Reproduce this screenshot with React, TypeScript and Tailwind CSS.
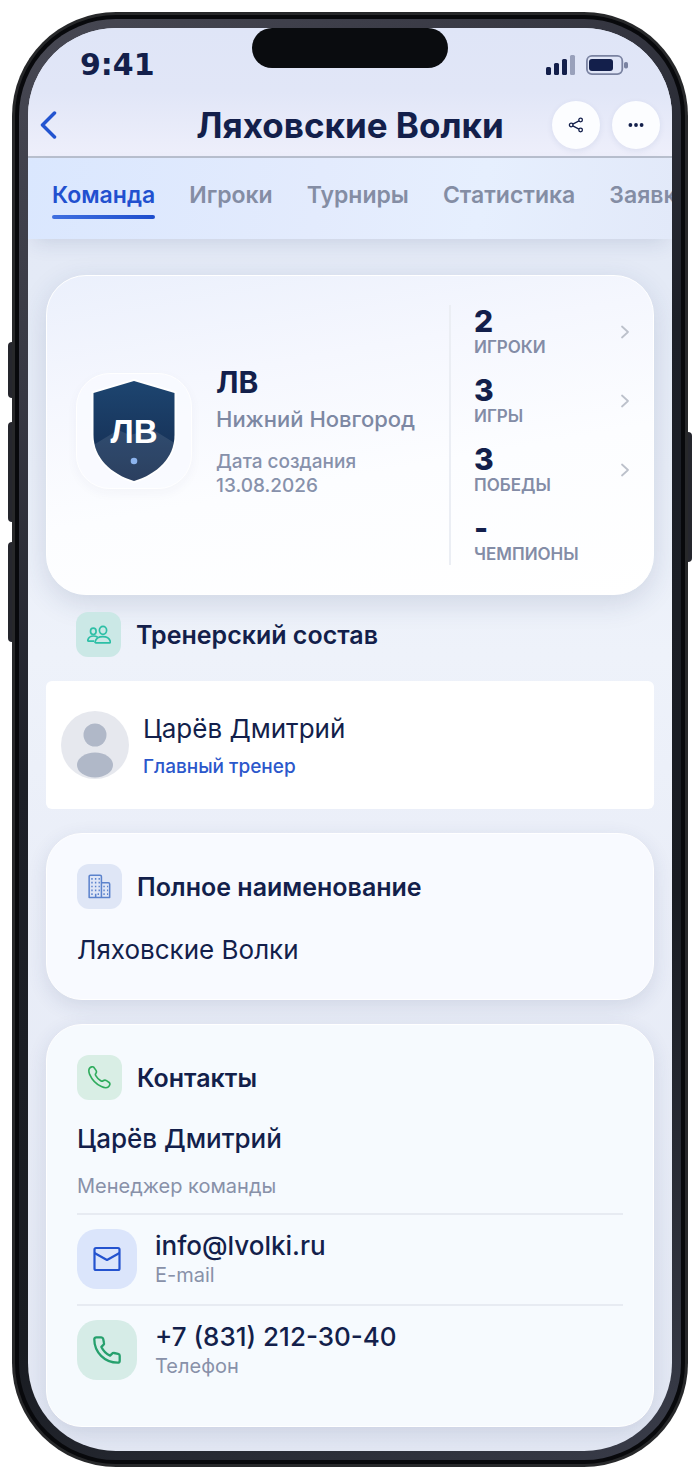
import { useState, type ReactNode } from "react";

const tabs = ["Команда", "Игроки", "Турниры", "Статистика", "Заявки"];

const stats = [
  { value: "2", label: "ИГРОКИ", link: true },
  { value: "3", label: "ИГРЫ", link: true },
  { value: "3", label: "ПОБЕДЫ", link: true },
  { value: "-", label: "ЧЕМПИОНЫ", link: false },
];

function SectionTitle({ icon, tint, children }: { icon: ReactNode; tint: string; children: ReactNode }) {
  return (
    <div className="flex items-center gap-[15px]">
      <span className={`flex size-[45px] shrink-0 items-center justify-center rounded-xl ${tint}`}>{icon}</span>
      <h2 className="text-[25px] leading-8 font-semibold">{children}</h2>
    </div>
  );
}

function StatusBar() {
  return (
    <div className="flex h-[73px] items-center justify-between pr-11 pl-[52px]">
      <span className="font-['DejaVu_Sans'] text-[30px] leading-9 font-bold">9:41</span>
      <div className="flex items-center gap-[10px]">
        <svg className="h-5 w-[30px]" viewBox="0 0 30 20" fill="#131f4b">
          <rect x="0" y="12" width="5" height="8" rx="1.5" />
          <rect x="8" y="8" width="5" height="12" rx="1.5" />
          <rect x="16" y="4" width="5" height="16" rx="1.5" />
          <rect x="24" y="0" width="5" height="20" rx="1.5" opacity="0.35" />
        </svg>
        <svg className="h-5 w-[42px]" viewBox="0 0 42 20" fill="none">
          <rect x="0.9" y="0.9" width="35.4" height="18.2" rx="5" stroke="#131f4b" strokeOpacity="0.5" strokeWidth="1.8" />
          <rect x="3" y="4" width="24" height="12" rx="3" fill="#131f4b" />
          <rect x="38" y="7" width="4" height="6.5" rx="1.8" fill="#131f4b" fillOpacity="0.5" />
        </svg>
      </div>
    </div>
  );
}

function ShareIcon() {
  return (
    <svg className="h-4 w-4" viewBox="0 0 16 16" fill="none" stroke="#131f4b" strokeWidth="1.3">
      <circle cx="3.2" cy="8" r="1.8" />
      <circle cx="12.6" cy="3" r="1.8" />
      <circle cx="12.6" cy="13" r="1.8" />
      <path d="M4.8 7.1 11 3.9M4.8 8.900 11 12.1" />
    </svg>
  );
}

function CoachesIcon() {
  return (
    <svg className="h-5 w-6" viewBox="0 0 24 20" fill="none" stroke="#2dbfa6" strokeWidth="1.7" strokeLinejoin="round">
      <ellipse cx="16" cy="5.3" rx="3.6" ry="4" />
      <ellipse cx="6.3" cy="6.3" rx="2.8" ry="3.2" />
      <path d="M8.7 17.8c-.6 0-.8-.5-.6-1.1.9-3.2 4.1-5 7.7-5s6.8 1.8 7.6 5c.2.6-.1 1.1-.7 1.1z" />
      <path d="M10.6 12.2c-1.1-.8-2.500-1.200-4.100-1.200-2.700 0-5 1.400-5.700 4-.2.600.1 1.100.7 1.100h5.700" />
    </svg>
  );
}

function BuildingIcon() {
  return (
    <svg className="h-[25px] w-[23px]" viewBox="0 0 24 26" fill="none" stroke="#5b82cc" strokeWidth="1.6" strokeLinejoin="round">
      <path d="M1.2 24.5V2.6q0-1.400 1.400-1.400h10q1.400 0 1.400 1.400v21.900zM14 9h7.200q1.400 0 1.400 1.400v14.100H14M8 24v-3.500" />
      <path d="M3.4 5h9M3.4 9h9M3.4 13h9M3.4 17h9M3.4 21h3M10 21h2.400M16 13h5M16 17h5M16 21h5" strokeWidth="1.7" strokeDasharray="1.5 2.3" />
    </svg>
  );
}

function HandsetIcon() {
  return (
    <svg className="size-[23px]" viewBox="0 0 24 24" fill="none" stroke="#2fac5d" strokeWidth="1.700" strokeLinejoin="round">
      <path d="M1.6 2.4C2.8.8 5 .3 6.2 1.500l2 2.800c.9 1.300.7 2.600-.1 3.600-.6.700-.5 1.400 0 2.200 1.200 2.200 3 4 5.200 5.300.9.600 1.700.6 2.500 0 1.100-.8 2.300-.9 3.500-.1l2.800 1.900c1.300 1 .9 3-.8 4.500-1.500 1.300-4 1.300-7.300-.2C9.200 19.400 4 14 1.700 8.800.6 6 .6 3.900 1.600 2.400z" />
    </svg>
  );
}

function MailIcon() {
  return (
    <svg className="h-7 w-7" viewBox="0 0 28 28" fill="none" stroke="#2453cf" strokeWidth="2.2" strokeLinejoin="round">
      <rect x="1.5" y="3" width="25" height="22" rx="1.5" />
      <path d="M1.5 8 14 15 26.500 8" />
    </svg>
  );
}

function PhoneIcon() {
  return (
    <svg className="h-7 w-7" viewBox="0 0 28 28" fill="none" stroke="#26a06d" strokeWidth="2.3" strokeLinejoin="round">
      <path d="M3.3 1.3h4.9a2 2 0 0 1 2 1.600l.8 4.100a2 2 0 0 1-.6 1.900L8.400 10.900c1.900 4 4.700 6.800 8.700 8.700l2-2a2 2 0 0 1 1.900-.6l4.100.8a2 2 0 0 1 1.600 2v4.900a2 2 0 0 1-2 2C11.700 26.700 1.300 16.300 1.300 3.300a2 2 0 0 1 2-2z" />
    </svg>
  );
}

function Crest() {
  return (
    <svg className="h-[104px] w-[88px]" viewBox="0 0 88 104">
      <defs>
        <linearGradient id="crest" x1="0" y1="0" x2="0" y2="1">
          <stop offset="0" stopColor="#1d4570" />
          <stop offset="1" stopColor="#142a4e" />
        </linearGradient>
        <clipPath id="shield">
          <path d="M44 2 84.500 14V56C84.500 79 67 95 44 102 21 95 3.500 79 3.500 56V14z" />
        </clipPath>
      </defs>
      <path d="M44 2 84.500 14V56C84.500 79 67 95 44 102 21 95 3.500 79 3.500 56V14z" fill="url(#crest)" stroke="#fff" strokeWidth="4" paintOrder="stroke" />
      <g clipPath="url(#shield)">
        <path d="M0 68 28 51 40 56 62 50 88 66V104H0z" fill="#fff" fillOpacity="0.1" />
      </g>
      <text x="44" y="64" textAnchor="middle" fontFamily="Liberation Sans, Arial, sans-serif" fontWeight="700" fontSize="33" fill="#fff">
        ЛВ
      </text>
      <circle cx="44" cy="82" r="3.300" fill="#8cb4ee" />
    </svg>
  );
}

function Avatar() {
  return (
    <svg className="size-[68px] shrink-0 rounded-full bg-[#e6e8ee]" viewBox="0 0 68 68" fill="#b0b8c8">
      <circle cx="34" cy="24" r="11.500" />
      <ellipse cx="34" cy="54" rx="18" ry="12.500" />
    </svg>
  );
}

export default function App() {
  const [active, setActive] = useState("Команда");

  return (
    <div className="relative bg-white p-3 font-[Inter,sans-serif] text-[#131f4b]">
      {/* Hardware buttons */}
      <span className="absolute top-[342px] left-2 h-14 w-2 rounded-l-sm bg-[#25262d]" />
      <span className="absolute top-[422px] left-2 h-[100px] w-2 rounded-l-sm bg-[#25262d]" />
      <span className="absolute top-[542px] left-2 h-[100px] w-2 rounded-l-sm bg-[#25262d]" />
      <span className="absolute top-[432px] right-2 h-[130px] w-2 rounded-r-sm bg-[#25262d]" />

      <div className="relative rounded-[104px] bg-[#27282a] p-[3px]">
        <div className="rounded-[101px] bg-[#08090c] p-1">
          <div className="rounded-[97px] bg-[linear-gradient(145deg,#474853_0%,#373843_20%,#1d2028_40%,#191c22_70%,#3a3d4a_100%)] p-[9px]">
            <div className="relative overflow-hidden rounded-[88px] bg-[linear-gradient(180deg,#e3e8f6_0%,#e4eaf6_18%,#eef2fa_44%,#eaeef8_60%,#e2e7f3_100%)]">
              {/* Dynamic island */}
              <div className="absolute top-0 left-1/2 h-10 w-[196px] -translate-x-1/2 rounded-[20px] bg-[#0a0c0f]" />

              <header className="border-b-2 border-[#b9c0ce] bg-[linear-gradient(180deg,#dfe5f7_0%,#e1e6f7_50%,#eeeffb_100%)] pb-[7px]">
                <StatusBar />
                <div className="grid h-12 grid-cols-[108px_1fr_108px] items-center px-3">
                  <button type="button" aria-label="Назад">
                    <svg className="h-7 w-[17px]" viewBox="0 0 17 28" fill="none" stroke="#2354d0" strokeWidth="3.5" strokeLinecap="round" strokeLinejoin="round">
                      <path d="M14.500 2 2.500 14 14.500 26" />
                    </svg>
                  </button>
                  <h1 className="text-center text-[35px] leading-10 font-bold whitespace-nowrap">Ляховские Волки</h1>
                  <div className="flex justify-end gap-3">
                    <button type="button" aria-label="Поделиться" className="flex size-12 items-center justify-center rounded-full bg-[#fcfdff] shadow-[0_2px_6px_rgba(30,50,110,0.08)]">
                      <ShareIcon />
                    </button>
                    <button type="button" aria-label="Ещё" className="flex size-12 items-center justify-center rounded-full bg-[#fcfdff] shadow-[0_2px_6px_rgba(30,50,110,0.08)]">
                      <svg className="h-4 w-4" viewBox="0 0 16 16" fill="#131f4b">
                        <circle cx="2.4" cy="8" r="1.9" />
                        <circle cx="8" cy="8" r="1.9" />
                        <circle cx="13.6" cy="8" r="1.9" />
                      </svg>
                    </button>
                  </div>
                </div>
              </header>

              <nav className="flex h-[81px] gap-[34px] overflow-hidden bg-[linear-gradient(100deg,#dae7fe_0%,#e3ebfd_45%,#e6effe_70%,#e2e9f9_100%)] pt-[22px] pl-6 shadow-[0_8px_20px_-6px_rgba(40,60,110,0.16)]">
                {tabs.map((tab) => (
                  <button
                    key={tab}
                    type="button"
                    onClick={() => setActive(tab)}
                    className={`relative h-[39px] shrink-0 pb-[9px] text-[23px] leading-[30px] font-semibold ${tab === active ? "text-[#2150cf]" : "text-[#848da4]"}`}
                  >
                    {tab}
                    {tab === active && <span className="absolute inset-x-0 bottom-0 h-1 rounded-full bg-linear-to-r from-[#3f6fe0] to-[#1d4dcd]" />}
                  </button>
                ))}
              </nav>

              <main className="px-[18px] pt-9 pb-6">
                <section className="flex rounded-[40px] border border-white bg-[linear-gradient(170deg,#ebf0fc_0%,#f5f7fe_30%,#fcfdff_60%,#ffffff_100%)] py-[29px] pr-[23px] pl-[29px] shadow-[0_8px_28px_rgba(40,60,110,0.15)]">
                  <div className="flex flex-1 items-center gap-6 pb-2">
                    <div className="flex size-[116px] shrink-0 items-center justify-center rounded-[34px] border border-white bg-[#f9faff]/80 shadow-[0_4px_12px_rgba(40,60,110,0.04)]">
                      <Crest />
                    </div>
                    <div>
                      <p className="text-[30px] leading-9 font-bold">ЛВ</p>
                      <p className="mt-1 text-[22px] leading-[30px] font-medium text-[#7d88a3]">Нижний Новгород</p>
                      <p className="mt-4 text-[19px] leading-6 font-medium text-[#8791ab]">
                        Дата создания
                        <br />
                        13.08.2026
                      </p>
                    </div>
                  </div>
                  <ul className="flex w-[181px] flex-col gap-4 border-l-2 border-[#ebeef4] pl-[23px]">
                    {stats.map((stat) => (
                      <li key={stat.label} className="flex items-center justify-between">
                        <div>
                          <p className="text-[30px] leading-8 font-extrabold">{stat.value}</p>
                          <p className="text-[17px] leading-[21px] font-semibold text-[#838ca6]">{stat.label}</p>
                        </div>
                        {stat.link && (
                          <svg className="h-3.5 w-2.5" viewBox="0 0 10 14" fill="none" stroke="#bcc1cb" strokeWidth="1.8" strokeLinecap="round" strokeLinejoin="round">
                            <path d="M2 1.500 8 7 2 12.500" />
                          </svg>
                        )}
                      </li>
                    ))}
                  </ul>
                </section>

                <div className="px-[30px] pt-[17px] pb-6">
                  <SectionTitle tint="bg-[#cbe8e6]" icon={<CoachesIcon />}>
                    Тренерский состав
                  </SectionTitle>
                </div>
                <section className="flex h-32 items-center gap-[14px] rounded-md bg-white px-[15px]">
                  <Avatar />
                  <div>
                    <p className="text-[26px] leading-9">Царёв Дмитрий</p>
                    <p className="mt-2 text-[19px] leading-6 font-medium text-[#2b57cb]">Главный тренер</p>
                  </div>
                </section>

                <section className="mt-6 rounded-[36px] border border-white bg-[#f8faff] px-[30px] pt-[30px] pb-[31px] shadow-[0_6px_20px_rgba(40,60,110,0.12)]">
                  <SectionTitle tint="bg-[#dfe6f6]" icon={<BuildingIcon />}>
                    Полное наименование
                  </SectionTitle>
                  <p className="mt-[23px] text-[26px] leading-9">Ляховские Волки</p>
                </section>

                <section className="mt-6 rounded-[36px] border border-white bg-[#f6fafe] px-[30px] pt-[30px] pb-[46px] shadow-[0_6px_20px_rgba(40,60,110,0.12)]">
                  <SectionTitle tint="bg-[#d9eee5]" icon={<HandsetIcon />}>
                    Контакты
                  </SectionTitle>
                  <p className="mt-[23px] text-[26px] leading-8 font-medium">Царёв Дмитрий</p>
                  <p className="mt-4 text-[20px] leading-[30px] text-[#8891a9]">Менеджер команды</p>
                  <ul className="mt-3">
                    <li className="flex items-center gap-[18px] border-t-2 border-[#e7ebf2] pt-[14px] pb-[15px]">
                      <span className="flex size-[60px] shrink-0 items-center justify-center rounded-[20px] bg-[#dbe5fb]">
                        <MailIcon />
                      </span>
                      <div>
                        <a href="mailto:info@lvolki.ru" className="block text-[26px] leading-8 font-medium">
                          info@lvolki.ru
                        </a>
                        <p className="text-[20px] leading-[26px] text-[#8891a9]">E-mail</p>
                      </div>
                    </li>
                    <li className="flex items-center gap-[18px] border-t-2 border-[#e7ebf2] pt-[14px]">
                      <span className="flex size-[60px] shrink-0 items-center justify-center rounded-[20px] bg-[#d6ece7]">
                        <PhoneIcon />
                      </span>
                      <div>
                        <a href="tel:+78312123040" className="block text-[26px] leading-8 font-medium">
                          +7 (831) 212-30-40
                        </a>
                        <p className="text-[20px] leading-[26px] text-[#8891a9]">Телефон</p>
                      </div>
                    </li>
                  </ul>
                </section>
              </main>
            </div>
          </div>
        </div>
      </div>
    </div>
  );
}
